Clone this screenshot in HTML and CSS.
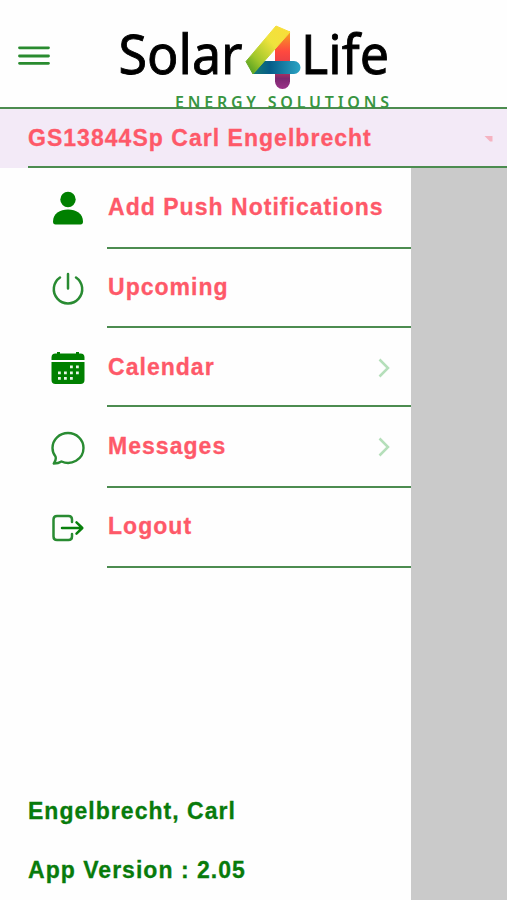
FILE: index.html
```
<!DOCTYPE html>
<html lang="en">
<head>
<meta charset="utf-8">
<title>Solar4Life</title>
<link rel="stylesheet" href="styles.css">
</head>
<body>
<div class="app">
  <header class="header">
    <svg class="burger" viewBox="0 0 32 22" fill="none" stroke="#298b2f" stroke-width="2.8" stroke-linecap="round"><path d="M1.500 2.800h29M1.500 11h29M1.500 18.300h29"/></svg>
    <svg class="logo" viewBox="0 0 280 90">
      <defs>
        <linearGradient id="sun" x1="0" y1="1" x2="1" y2="0"><stop offset="0" stop-color="#3e951f"/><stop offset=".28" stop-color="#a1c72b"/><stop offset=".62" stop-color="#efe33d"/><stop offset="1" stop-color="#fbdc38"/></linearGradient>
        <linearGradient id="stem" x1="0" y1="0" x2="0" y2="1"><stop offset="0" stop-color="#f5a51e"/><stop offset=".35" stop-color="#ff493f"/><stop offset=".62" stop-color="#e13c48"/><stop offset=".82" stop-color="#7c2870"/><stop offset="1" stop-color="#9b3288"/></linearGradient>
        <linearGradient id="bar" x1="0" y1="0" x2="1" y2="0"><stop offset="0" stop-color="#167c74"/><stop offset=".35" stop-color="#065c88"/><stop offset="1" stop-color="#2ba5c5"/></linearGradient>
      </defs>
      <text class="word" x="2.500" y="56" textLength="124" lengthAdjust="spacingAndGlyphs">Solar</text>
      <path d="M159 20L174 13V63.500a7.500 7.500 0 0 1-15 0z" fill="url(#stem)"/>
      <path d="M137 56L147 43H178a6.500 6.500 0 0 1 0 13z" fill="url(#bar)"/>
      <path d="M160 8L174 14 137 56 130 43.500z" fill="url(#sun)" stroke="url(#sun)" stroke-width="1" stroke-linejoin="round"/>
      <text class="word" x="185" y="56" textLength="88" lengthAdjust="spacingAndGlyphs">Life</text>
      <text class="tagline" x="59" y="90" textLength="214">ENERGY SOLUTIONS</text>
    </svg>
  </header>
  <div class="account"><div class="account-row">
    <span class="account-name">GS13844Sp Carl Engelbrecht</span>
    <svg class="caret" viewBox="0 0 10 6"><path d="M.5 0H8.500V5.500H6z" fill="#f5b3c1"/></svg>
  </div></div>
  <div class="body">
    <nav class="drawer">
      <ul class="menu">
        <li class="item push">
          <svg class="icon" viewBox="0 0 36 36" fill="#008000"><circle cx="18" cy="9.500" r="7.700"/><path d="M3 31.500C3 23.500 10 19.500 18 19.500S33 23.500 33 31.500Q33 34.500 30.500 34.500H5.500Q3 34.500 3 31.500z"/></svg>
          <div class="label"><span>Add Push Notifications</span></div>
        </li>
        <li class="item upcoming">
          <svg class="icon" viewBox="0 0 36 36" fill="none" stroke="#298b32" stroke-width="2.500" stroke-linecap="round"><path d="M18 3V17.500M10 6.500A14.200 14.200 0 1 0 26 6.500"/></svg>
          <div class="label"><span>Upcoming</span></div>
        </li>
        <li class="item calendar">
          <svg class="icon" viewBox="0 0 36 36" fill="#008000"><path d="M1.500 10V7.500Q1.500 3.500 5.500 3.500H7V2H10V3.500H26V2H29V3.500H30.500Q34.500 3.500 34.500 7.500V10zM1.500 12H34.500V30Q34.500 34 30.500 34H5.500Q1.500 34 1.500 30z"/><g fill="#eaf7e9"><path d="M20 15.500h2.800v2.800H20zM26 15.500h2.800v2.800H26zM8 21.500h2.800v2.800H8zM14 21.500h2.800v2.800H14zM20 21.500h2.800v2.800H20zM26 21.500h2.800v2.800H26zM8 27h2.800v2.800H8zM14 27h2.800v2.800H14zM20 27h2.800v2.800H20z"/></g></svg>
          <div class="label"><span>Calendar</span><svg class="chevron" viewBox="0 0 12 20"><path d="M1.500 1.500L10 10 1.500 18.500"/></svg></div>
        </li>
        <li class="item messages">
          <svg class="icon" viewBox="0 0 36 36" fill="none" stroke="#298b32" stroke-width="2.400" stroke-linejoin="round"><path d="M5.500 27.500Q6.500 31 3.800 34.500Q8.500 34.500 11.500 32.500C21 37 33.500 30.500 33.500 19C33.500 10.500 26.500 4 18 4S2.500 10.500 2.500 19Q2.500 24 5.500 27.500z"/></svg>
          <div class="label"><span>Messages</span><svg class="chevron" viewBox="0 0 12 20"><path d="M1.500 1.500L10 10 1.500 18.500"/></svg></div>
        </li>
        <li class="item logout">
          <svg class="icon" viewBox="0 0 36 36" fill="none" stroke="#298b32" stroke-width="2.500" stroke-linecap="round" stroke-linejoin="round"><path d="M22 12V9.500Q22 6 18.500 6H7Q3.500 6 3.500 9.500V26.500Q3.500 30 7 30H18.500Q22 30 22 26.500V24"/><path d="M12 18H32M26.500 12.300L32.300 18 26.500 23.700" stroke="#08800c"/></svg>
          <div class="label"><span>Logout</span></div>
        </li>
      </ul>
      <footer class="info">
        <p class="user">Engelbrecht, Carl</p>
        <p class="version">App Version : 2.05</p>
      </footer>
    </nav>
    <div class="backdrop"></div>
  </div>
</div>
</body>
</html>
```
FILE: styles.css
```
* { box-sizing: border-box; }
body {
  margin: 0;
  background: #fefefe;
  font: bold 23px/28px "Liberation Sans", Arial, sans-serif;
  letter-spacing: 1.03px;
  color: #fe5969;
  -webkit-text-stroke: 0.3px currentColor;
}
.app { display: flex; flex-direction: column; height: 900px; overflow: hidden; }
.header {
  display: flex;
  height: 109px;
  flex: none;
  border-bottom: 2px solid #4c8c50;
}
.burger { width: 32px; height: 22px; margin: 45px 0 0 18px; }
.logo { width: 280px; height: 90px; margin: 18px 0 0 66px; overflow: visible; }
.word { font: 400 55px "Noto Sans", sans-serif; letter-spacing: 0; fill: #000; -webkit-text-stroke: 0; stroke: #000; stroke-width: 0.9px; }
.tagline { font: 600 16px "Noto Sans", sans-serif; letter-spacing: 0; fill: #389541; -webkit-text-stroke: 0; }
.account { flex: none; height: 59px; padding-left: 28px; background: #f3eaf7; }
.account-row {
  display: flex;
  justify-content: space-between;
  height: 59px;
  padding: 15px 13px 0 0;
  border-bottom: 2px solid #4c8c50;
}
.caret { width: 10px; height: 6px; margin-top: 12px; }
.body { display: flex; flex: 1; }
.drawer { display: flex; flex-direction: column; width: 411px; }
.backdrop { flex: 1; background: #cacaca; }
.menu { margin: 0; padding: 0; list-style: none; }
.item { display: flex; height: 80px; padding-left: 50px; }
.push { height: 81px; }
.upcoming, .calendar { height: 79px; }
.messages { height: 81px; }
.icon { width: 36px; height: 36px; margin: 22px 21px 0 0; }
.label {
  display: flex;
  flex: 1;
  justify-content: space-between;
  padding: 25px 21px 0 1px;
  border-bottom: 2px solid #4c8c50;
}
.upcoming .label, .logout .label { padding-top: 24px; }
.chevron { width: 12px; height: 20px; margin-top: 5px; fill: none; stroke: #b5dfba; stroke-width: 2.5; }
.info { margin-top: auto; padding: 0 0 16px 28px; color: #087b0b; }
.info p { margin: 0; }
.info .user { margin-bottom: 31px; }
```
